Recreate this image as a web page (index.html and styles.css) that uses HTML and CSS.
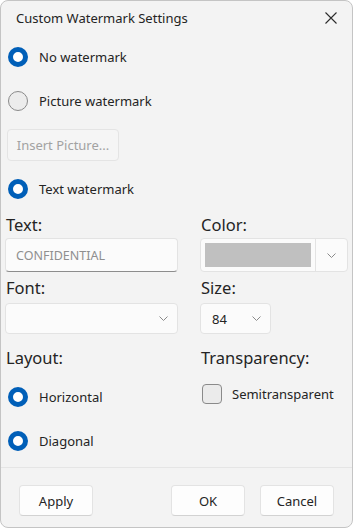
FILE: index.html
```html
<!DOCTYPE html>
<html>
<head>
<meta charset="utf-8">
<link rel="stylesheet" href="styles.css">
</head>
<body>
<div class="dialog">
  <div class="titlebar">
    <span class="title">Custom Watermark Settings</span>
    <svg class="close" width="12" height="12" viewBox="0 0 12 12"><path d="M0.5 0.5 L11.5 11.5 M11.5 0.5 L0.5 11.5" stroke="#2b2b2b" stroke-width="1.1" fill="none"/></svg>
  </div>
  <div class="content">
    <div class="radio-row"><span class="radio checked"></span><span class="rlabel">No watermark</span></div>
    <div class="radio-row"><span class="radio"></span><span class="rlabel">Picture watermark</span></div>
    <div class="insert-wrap"><button class="insert" disabled>Insert Picture...</button></div>
    <div class="radio-row"><span class="radio checked"></span><span class="rlabel">Text watermark</span></div>
    <div class="grid">
      <div class="flabel">Text:</div>
      <div class="flabel">Color:</div>
      <div class="textbox">CONFIDENTIAL</div>
      <div class="colorcombo">
        <div class="swatch-area"><div class="swatch"></div></div>
        <div class="chev-area"><svg class="chev" width="9" height="5" viewBox="0 0 9 5"><path d="M0.5 0.5 L4.5 4.5 L8.5 0.5" stroke="#8a8a8a" stroke-width="1" fill="none"/></svg></div>
      </div>
      <div class="flabel mid">Font:</div>
      <div class="flabel mid">Size:</div>
      <div class="combo fontcombo"><span></span><svg class="chev" width="9" height="5" viewBox="0 0 9 5"><path d="M0.5 0.5 L4.5 4.5 L8.5 0.5" stroke="#8a8a8a" stroke-width="1" fill="none"/></svg></div>
      <div><div class="combo sizecombo"><span>84</span><svg class="chev" width="9" height="5" viewBox="0 0 9 5"><path d="M0.5 0.5 L4.5 4.5 L8.5 0.5" stroke="#8a8a8a" stroke-width="1" fill="none"/></svg></div></div>
      <div class="flabel lower">Layout:</div>
      <div class="flabel lower">Transparency:</div>
      <div class="layout-col">
        <div class="radio-row"><span class="radio checked"></span><span class="rlabel">Horizontal</span></div>
        <div class="radio-row"><span class="radio checked"></span><span class="rlabel">Diagonal</span></div>
      </div>
      <div class="trans-col">
        <div class="check-row"><span class="checkbox"></span><span class="rlabel">Semitransparent</span></div>
      </div>
    </div>
  </div>
  <div class="footer">
    <button class="btn">Apply</button>
    <div class="spacer"></div>
    <button class="btn">OK</button>
    <button class="btn">Cancel</button>
  </div>
</div>
</body>
</html>
```

FILE: styles.css
```css
html, body {
  margin: 0;
  padding: 0;
  background: #ffffff;
}
body {
  width: 353px;
  height: 532px;
  overflow: hidden;
  font-family: "Noto Sans", "Open Sans", sans-serif;
  color: #242424;
}
.dialog {
  box-sizing: border-box;
  width: 353px;
  height: 528px;
  background: #f3f3f3;
  border: 1px solid #c4c4c4;
  border-radius: 8px;
  display: flex;
  flex-direction: column;
}
.titlebar {
  height: 34px;
  display: flex;
  align-items: center;
  padding-left: 15px;
  padding-right: 15px;
}
.title {
  font-size: 13px;
  flex: 1;
}
.close {
  display: block;
}
.content {
  flex: 1;
  padding-left: 4px;
}
.radio-row {
  height: 44px;
  display: flex;
  align-items: center;
  padding-left: 3px;
}
.radio {
  box-sizing: border-box;
  width: 20px;
  height: 20px;
  border-radius: 50%;
  border: 1px solid #8a8a8a;
  background: #ececec;
  flex: none;
}
.radio.checked {
  border: 5.5px solid #005fb8;
  background: #ffffff;
}
.rlabel {
  font-size: 13px;
  margin-left: 11px;
}
.insert-wrap {
  padding-top: 6px;
  padding-left: 2px;
  height: 44px;
  box-sizing: border-box;
}
.insert {
  box-sizing: border-box;
  height: 32px;
  width: 112px;
  font-family: inherit;
  font-size: 13px;
  color: #a2a2a2;
  background: #f5f5f5;
  border: 1px solid #e4e4e4;
  border-radius: 4px;
  padding: 0;
}
.grid {
  display: grid;
  grid-template-columns: 173px 148px;
  column-gap: 22px;
}
.flabel {
  font-size: 16.5px;
  height: 27px;
  line-height: 27px;
  padding-left: 1px;
}
.flabel.mid {
  line-height: 23px;
  padding-bottom: 4px;
  height: 23px;
}
.flabel.lower {
  margin-top: 10px;
  margin-bottom: 4px;
}
.textbox {
  box-sizing: border-box;
  height: 34px;
  background: #fbfbfb;
  border: 1px solid #e3e3e3;
  border-bottom: 1px solid #8d8d8d;
  border-radius: 4px;
  font-size: 12.5px;
  color: #8f8f8f;
  display: flex;
  align-items: center;
  padding-left: 10px;
  margin-bottom: 4px;
}
.colorcombo {
  box-sizing: border-box;
  height: 34px;
  background: #fbfbfb;
  border: 1px solid #e3e3e3;
  border-radius: 4px;
  display: flex;
}
.swatch-area {
  flex: 1;
  padding: 4px;
  border-right: 1px solid #e3e3e3;
}
.swatch {
  height: 100%;
  background: #c0c0c0;
}
.chev-area {
  width: 31px;
  display: flex;
  align-items: center;
  justify-content: center;
}
.chev {
  display: block;
}
.combo {
  box-sizing: border-box;
  height: 31px;
  background: #fbfbfb;
  border: 1px solid #e3e3e3;
  border-radius: 4px;
  display: flex;
  align-items: center;
  justify-content: space-between;
  padding-left: 11px;
  padding-right: 9px;
  font-size: 13px;
}
.sizecombo {
  width: 71px;
}
.check-row {
  display: flex;
  align-items: center;
  height: 20px;
  margin-top: 9px;
  padding-left: 2px;
}
.checkbox {
  box-sizing: border-box;
  width: 20px;
  height: 20px;
  border: 1px solid #8a8a8a;
  border-radius: 4px;
  background: #ebebeb;
  flex: none;
}
.check-row .rlabel {
  margin-left: 10px;
}
.footer {
  height: 60px;
  box-sizing: border-box;
  border-top: 1px solid #e5e5e5;
  display: flex;
  align-items: flex-start;
  padding-top: 17px;
  padding-left: 18px;
  padding-right: 18px;
  gap: 15px;
}
.spacer {
  flex: 1;
}
.btn {
  box-sizing: border-box;
  width: 74px;
  height: 31px;
  font-family: inherit;
  font-size: 13px;
  color: #242424;
  background: #fdfdfd;
  border: 1px solid #e3e3e3;
  border-bottom-color: #d2d2d2;
  border-radius: 4px;
  padding: 0;
}
```
